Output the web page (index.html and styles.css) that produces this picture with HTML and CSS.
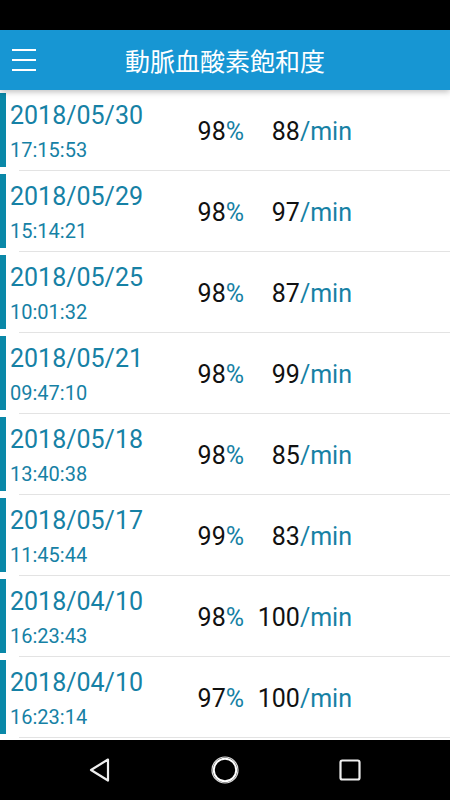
FILE: index.html
```html
<!DOCTYPE html>
<html lang="ja">
<head>
    <meta charset="UTF-8">
    <meta name="viewport" content="width=device-width, initial-scale=1.0">
    <title>動脈血酸素飽和度</title>
    <link rel="stylesheet" href="styles.css">
</head>
<body>

    <div class="status-bar"></div>

    <!-- Thanh tiêu đề -->
    <div class="app-bar">
        <div class="menu-btn">
            <span></span>
            <span></span>
            <span></span>
        </div>
        <h1 class="title">動脈血酸素飽和度</h1>
        <div></div>
    </div>

    <!-- Danh sách kết quả đo -->
    <div class="list">
        <div class="row">
            <div class="mark"></div>
            <div class="when">
                <div class="date">2018/05/30</div>
                <div class="time">17:15:53</div>
            </div>
            <div class="spo2">98<span class="unit">%</span></div>
            <div class="pulse">88<span class="unit">/min</span></div>
        </div>
        <div class="row">
            <div class="mark"></div>
            <div class="when">
                <div class="date">2018/05/29</div>
                <div class="time">15:14:21</div>
            </div>
            <div class="spo2">98<span class="unit">%</span></div>
            <div class="pulse">97<span class="unit">/min</span></div>
        </div>
        <div class="row">
            <div class="mark"></div>
            <div class="when">
                <div class="date">2018/05/25</div>
                <div class="time">10:01:32</div>
            </div>
            <div class="spo2">98<span class="unit">%</span></div>
            <div class="pulse">87<span class="unit">/min</span></div>
        </div>
        <div class="row">
            <div class="mark"></div>
            <div class="when">
                <div class="date">2018/05/21</div>
                <div class="time">09:47:10</div>
            </div>
            <div class="spo2">98<span class="unit">%</span></div>
            <div class="pulse">99<span class="unit">/min</span></div>
        </div>
        <div class="row">
            <div class="mark"></div>
            <div class="when">
                <div class="date">2018/05/18</div>
                <div class="time">13:40:38</div>
            </div>
            <div class="spo2">98<span class="unit">%</span></div>
            <div class="pulse">85<span class="unit">/min</span></div>
        </div>
        <div class="row">
            <div class="mark"></div>
            <div class="when">
                <div class="date">2018/05/17</div>
                <div class="time">11:45:44</div>
            </div>
            <div class="spo2">99<span class="unit">%</span></div>
            <div class="pulse">83<span class="unit">/min</span></div>
        </div>
        <div class="row">
            <div class="mark"></div>
            <div class="when">
                <div class="date">2018/04/10</div>
                <div class="time">16:23:43</div>
            </div>
            <div class="spo2">98<span class="unit">%</span></div>
            <div class="pulse">100<span class="unit">/min</span></div>
        </div>
        <div class="row">
            <div class="mark"></div>
            <div class="when">
                <div class="date">2018/04/10</div>
                <div class="time">16:23:14</div>
            </div>
            <div class="spo2">97<span class="unit">%</span></div>
            <div class="pulse">100<span class="unit">/min</span></div>
        </div>
    </div>

    <!-- Thanh điều hướng -->
    <div class="nav-bar">
        <div class="nav-btn">
            <svg width="24" height="26" viewBox="0 0 24 26">
                <path d="M20 2.5 L3 13 L20 23.5 Z" fill="none" stroke="#eee" stroke-width="2.2" stroke-linejoin="round"/>
            </svg>
        </div>
        <div class="nav-btn">
            <svg width="30" height="30" viewBox="0 0 30 30">
                <circle cx="15" cy="15" r="13" fill="none" stroke="#ddd" stroke-width="1.2"/>
                <circle cx="15" cy="15" r="11.2" fill="none" stroke="#fff" stroke-width="2"/>
            </svg>
        </div>
        <div class="nav-btn">
            <svg width="24" height="24" viewBox="0 0 24 24">
                <rect x="2.5" y="2.5" width="19" height="19" rx="1.8" fill="none" stroke="#eee" stroke-width="2.2"/>
            </svg>
        </div>
    </div>

</body>
</html>
```

FILE: styles.css
```css
body {
    margin: 0;
    width: 450px;
    height: 800px;
    display: flex;
    flex-direction: column;
    background-color: #fff;
    font-family: Roboto, "Noto Sans CJK JP", sans-serif;
    overflow: hidden;
}

.status-bar {
    height: 30px;
    background-color: #000;
}

.app-bar {
    height: 60px;
    display: grid;
    grid-template-columns: 60px 1fr 60px;
    align-items: center;
    background-color: #1796d3;
    box-shadow: 0 2px 6px rgba(0, 0, 0, 0.25);
    position: relative;
    z-index: 1;
}

.menu-btn {
    display: flex;
    flex-direction: column;
    gap: 8.5px;
    padding-left: 12px;
}

.menu-btn span {
    display: block;
    width: 24px;
    height: 1.5px;
    background-color: #fff;
}

.title {
    margin: 0;
    text-align: center;
    color: #fff;
    font-family: "Noto Sans CJK JP", sans-serif;
    font-size: 25px;
    font-weight: normal;
    line-height: 30px;
}

.list {
    height: 650px;
    overflow: hidden;
}

/* Mỗi dòng cao 80px, đường kẻ 1px bên dưới */
.row {
    display: flex;
    height: 80px;
    align-items: center;
    position: relative;
    margin-bottom: 1px;
}

.row::after {
    content: "";
    position: absolute;
    left: 19px;
    right: 0;
    bottom: -1px;
    height: 1px;
    background-color: #e3e3e3;
}

.mark {
    width: 6px;
    align-self: stretch;
    margin: 3px 0;
    background-color: #0a88a8;
}

.when {
    width: 170px;
    padding-left: 4px;
    color: #1681a5;
    align-self: flex-start;
}

.date {
    font-size: 25px;
    margin-top: 11px;
}

.time {
    font-size: 20px;
    margin-top: 8px;
}

.spo2,
.pulse {
    font-size: 25px;
    color: #111;
    text-align: right;
    padding-top: 3px;
}

.spo2 {
    width: 64px;
}

.pulse {
    width: 108px;
}

.unit {
    color: #1681a5;
}

.nav-bar {
    margin-top: auto;
    height: 60px;
    display: flex;
    justify-content: center;
    align-items: center;
    background-color: #000;
}

.nav-btn {
    width: 125px;
    display: flex;
    justify-content: center;
    align-items: center;
}

.nav-btn svg {
    display: block;
}
```
